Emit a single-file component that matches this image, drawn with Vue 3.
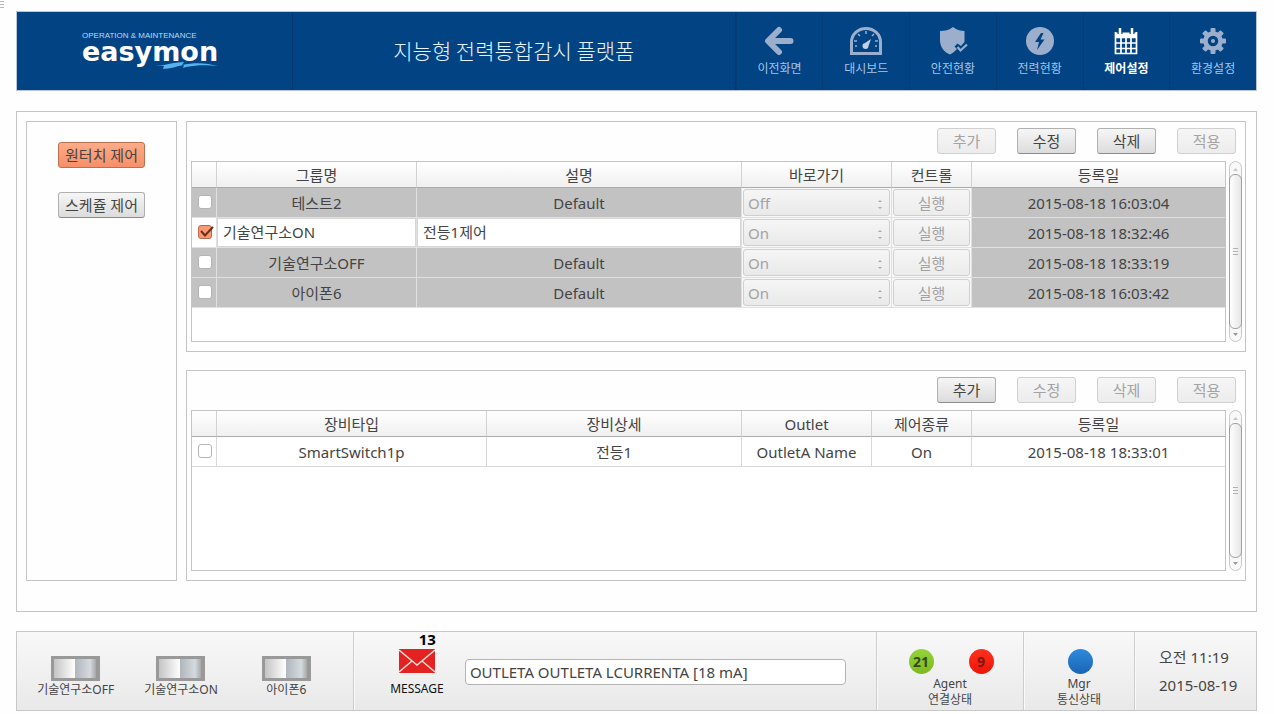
<script setup>
import { ref } from 'vue'

const nav = [
  { label: '이전화면', icon: 'back' },
  { label: '대시보드', icon: 'gauge' },
  { label: '안전현황', icon: 'shield' },
  { label: '전력현황', icon: 'power' },
  { label: '제어설정', icon: 'calendar', active: true },
  { label: '환경설정', icon: 'gear' },
]
const teeth = [0, 45, 90, 135, 180, 225, 270, 315]

const groupActions = [
  { label: '추가', disabled: true },
  { label: '수정' },
  { label: '삭제' },
  { label: '적용', disabled: true },
]
const deviceActions = [
  { label: '추가' },
  { label: '수정', disabled: true },
  { label: '삭제', disabled: true },
  { label: '적용', disabled: true },
]

const groups = ref([
  { name: '테스트2', desc: 'Default', shortcut: 'Off', date: '2015-08-18 16:03:04', checked: false },
  { name: '기술연구소ON', desc: '전등1제어', shortcut: 'On', date: '2015-08-18 18:32:46', checked: true },
  { name: '기술연구소OFF', desc: 'Default', shortcut: 'On', date: '2015-08-18 18:33:19', checked: false },
  { name: '아이폰6', desc: 'Default', shortcut: 'On', date: '2015-08-18 16:03:42', checked: false },
])
const devices = ref([
  { type: 'SmartSwitch1p', detail: '전등1', outlet: 'OutletA Name', control: 'On', date: '2015-08-18 18:33:01', checked: false },
])
const shortcuts = ['기술연구소OFF', '기술연구소ON', '아이폰6']
const message = ref('OUTLETA OUTLETA LCURRENTA [18 mA]')
</script>

<template>
  <div class="page">
    <svg class="handle" width="5" height="9" viewBox="0 0 5 9" aria-hidden="true">
      <path d="M0 1.5h4M0 4.5h4M0 7.5h4" stroke="#b5b5b5" />
    </svg>

    <header class="top">
      <div class="brand">
        <div class="logo">
          <span class="tagline">OPERATION &amp; MAINTENANCE</span>
          <span class="wordmark">easymon</span>
          <svg class="swoosh" width="64" height="8" viewBox="0 0 64 8" aria-hidden="true">
            <path d="M0 4C9 4 18 0 29 0L27 3C40 0 52 1 63 4C51 3 42 3 31 5L28 6L29 3C22 4 15 7 8 7L9 4Z" fill="#55b4ef" />
          </svg>
        </div>
      </div>
      <h1 class="title">지능형 전력통합감시 플랫폼</h1>
      <nav class="nav">
        <a v-for="n in nav" :key="n.label" href="#" :class="['nav-item', { active: n.active }]">
          <svg width="34" height="30" viewBox="0 0 34 30" aria-hidden="true">
            <g v-if="n.icon === 'back'" fill="none" stroke="#9bafcd" stroke-width="6" stroke-linecap="round" stroke-linejoin="round">
              <path d="M28.500 15H7M17 4L6 15L17 26" />
            </g>
            <g v-else-if="n.icon === 'gauge'">
              <path d="M2.500 27.500V16a14.500 13.500 0 0 1 29 0V27.500Z" fill="none" stroke="#9bafcd" stroke-width="3" />
              <path d="M17 5v3M9 8l2 2M25 8l-2 2M5 15h3M29 15h-3M6 20h2M28 20h-2" stroke="#9bafcd" stroke-width="1.500" />
              <path d="M22 13L19.500 20A3 3 0 1 1 16 17Z" fill="#c3d0e4" />
            </g>
            <g v-else-if="n.icon === 'shield'">
              <path d="M17 1C13 4 9 5 4 5V14C4 21 8 26 14 28.500C17 27 19 25 21 23L18.500 20.500L21.500 17.500L25 20L28.500 16V5C25 5 21 4 17 1Z" fill="#9bafcd" />
              <path d="M21.500 21L24.500 24.500L31 18.500" fill="none" stroke="#9bafcd" stroke-width="2.200" />
            </g>
            <g v-else-if="n.icon === 'power'">
              <circle cx="17" cy="15" r="14" fill="#9bafcd" />
              <path d="M18 7L12 16H16L14 24L21.500 13.500H17.500L20.500 7Z" fill="#014383" />
            </g>
            <g v-else-if="n.icon === 'calendar'" fill="none" stroke="#fff">
              <path d="M6.500 6V27.500H27.500V6M6 11.500H28M6 17H28M6 22.500H28M12 11V27M17 11V27M22 11V27" stroke-width="1.700" />
              <path d="M6 9H28" stroke-width="5" />
              <path d="M11 2V8M23 2V8" stroke="#014383" stroke-width="5" />
              <path d="M11 2V9M23 2V9" stroke-width="2.500" />
            </g>
            <g v-else>
              <rect v-for="t in teeth" :key="t" x="14.500" y="2" width="5" height="6" rx="1" :transform="`rotate(${t} 17 15)`" fill="#9bafcd" />
              <circle cx="17" cy="15" r="7.500" fill="none" stroke="#9bafcd" stroke-width="4.500" />
              <circle cx="17" cy="15" r="2" fill="#9bafcd" />
            </g>
          </svg>
          <span>{{ n.label }}</span>
        </a>
      </nav>
    </header>

    <main class="main">
      <aside class="side">
        <button type="button" class="btn selected">원터치 제어</button>
        <button type="button" class="btn">스케쥴 제어</button>
      </aside>

      <div class="content">
        <section class="panel groups">
          <div class="actions">
            <button v-for="a in groupActions" :key="a.label" type="button" class="btn" :disabled="a.disabled">{{ a.label }}</button>
          </div>
          <div class="grid">
            <div class="frame">
              <table>
                <colgroup>
                  <col class="c-check" /><col class="c-name" /><col class="c-desc" /><col class="c-short" /><col class="c-run" /><col class="c-date" />
                </colgroup>
                <thead>
                  <tr><th></th><th>그룹명</th><th>설명</th><th>바로가기</th><th>컨트롤</th><th>등록일</th></tr>
                </thead>
                <tbody>
                  <tr v-for="g in groups" :key="g.date" class="shaded">
                    <td :class="['check', { open: g.checked }]">
                      <label class="tick">
                        <input v-model="g.checked" type="checkbox" :aria-label="g.name" />
                        <svg v-if="g.checked" width="18" height="16" viewBox="0 0 18 16" aria-hidden="true">
                          <path d="M4 7L8 11.500L16 3" fill="none" stroke="#6b2d16" stroke-width="2" />
                        </svg>
                      </label>
                    </td>
                    <template v-if="g.checked">
                      <td class="open"><input v-model="g.name" class="cell-input" type="text" aria-label="그룹명" /></td>
                      <td class="open"><input v-model="g.desc" class="cell-input" type="text" aria-label="설명" /></td>
                    </template>
                    <template v-else>
                      <td>{{ g.name }}</td>
                      <td>{{ g.desc }}</td>
                    </template>
                    <td class="control">
                      <div class="picker">
                        <select v-model="g.shortcut" disabled aria-label="바로가기">
                          <option>On</option>
                          <option>Off</option>
                        </select>
                        <svg width="6" height="11" viewBox="0 0 6 11" aria-hidden="true">
                          <path d="M1 3L3 1L5 3ZM1 8L3 10L5 8Z" fill="#aaa" />
                        </svg>
                      </div>
                    </td>
                    <td class="control"><button type="button" class="btn run" disabled>실행</button></td>
                    <td>{{ g.date }}</td>
                  </tr>
                </tbody>
              </table>
            </div>
            <div class="scroll" aria-hidden="true"><i class="up"></i><b></b><i class="down"></i></div>
          </div>
        </section>

        <section class="panel devices">
          <div class="actions">
            <button v-for="a in deviceActions" :key="a.label" type="button" class="btn" :disabled="a.disabled">{{ a.label }}</button>
          </div>
          <div class="grid">
            <div class="frame">
              <table>
                <colgroup>
                  <col class="c-check" /><col class="c-type" /><col class="c-detail" /><col class="c-outlet" /><col class="c-kind" /><col class="c-date" />
                </colgroup>
                <thead>
                  <tr><th></th><th>장비타입</th><th>장비상세</th><th>Outlet</th><th>제어종류</th><th>등록일</th></tr>
                </thead>
                <tbody>
                  <tr v-for="d in devices" :key="d.type">
                    <td class="check">
                      <label class="tick"><input v-model="d.checked" type="checkbox" :aria-label="d.type" /></label>
                    </td>
                    <td>{{ d.type }}</td>
                    <td>{{ d.detail }}</td>
                    <td>{{ d.outlet }}</td>
                    <td>{{ d.control }}</td>
                    <td>{{ d.date }}</td>
                  </tr>
                </tbody>
              </table>
            </div>
            <div class="scroll" aria-hidden="true"><i class="up"></i><b></b><i class="down"></i></div>
          </div>
        </section>
      </div>
    </main>

    <footer class="bottom">
      <div class="toggles">
        <button v-for="s in shortcuts" :key="s" type="button" class="toggle">
          <span class="switch"></span>
          <span>{{ s }}</span>
        </button>
      </div>
      <div class="messages">
        <label class="mail" for="message">
          <span class="count">13</span>
          <svg width="36" height="24" viewBox="0 0 36 24" aria-hidden="true">
            <rect width="36" height="24" fill="#e32322" />
            <path d="M0 1L18 16L36 1M0 23L13 12M36 23L23 12" fill="none" stroke="#ffd9d2" stroke-width="1.500" />
          </svg>
          <span class="mail-label">MESSAGE</span>
        </label>
        <input id="message" v-model="message" class="message-input" type="text" />
      </div>
      <div class="status agent">
        <div class="lamps"><span class="lamp green">21</span><span class="lamp red">9</span></div>
        <span>Agent</span><span>연결상태</span>
      </div>
      <div class="status mgr">
        <div class="lamps"><span class="lamp blue"></span></div>
        <span>Mgr</span><span>통신상태</span>
      </div>
      <div class="clock"><span>오전 11:19</span><span>2015-08-19</span></div>
    </footer>
  </div>
</template>

<style>
body {
  background: #fefefe;
}
</style>

<style scoped>
.page,
.page * {
  box-sizing: border-box;
}
.page {
  position: relative;
  padding: 11px 17px 3px 16px;
  font-family: "Noto Sans", "Noto Sans CJK KR", sans-serif;
  font-size: 15px;
  line-height: 20px;
  color: #444;
}
button,
input,
select {
  font: inherit;
  color: inherit;
  margin: 0;
}
.handle {
  position: absolute;
  left: 0;
  top: 0;
}

.top {
  display: flex;
  height: 80px;
  border: 1px solid #b9c6de;
  background: #014383;
  color: #fff;
}
.brand {
  width: 276px;
  padding: 19px 0 0 65px;
  border-right: 1px solid #02376f;
}
.logo {
  position: relative;
  display: flex;
  flex-direction: column;
}
.tagline {
  font: 8px/10px "Liberation Sans", sans-serif;
  color: #b9dcf5;
}
.wordmark {
  font: bold 27px/22px "DejaVu Sans", sans-serif;
}
.swoosh {
  position: absolute;
  left: 73px;
  top: 31px;
}
.title {
  flex: 1;
  margin: 0;
  padding-top: 23px;
  text-align: center;
  font: 300 21px/30px "Noto Sans CJK KR", sans-serif;
  color: #e6f4ff;
  border-right: 1px solid #02376f;
}
.nav {
  display: grid;
  grid-template-columns: repeat(6, 1fr);
  width: 42%;
}
.nav-item {
  display: flex;
  flex-direction: column;
  align-items: center;
  padding-top: 14px;
  gap: 5px;
  border-left: 1px solid #053c76;
  font-size: 12px;
  line-height: 16px;
  color: #a5c4e8;
  text-decoration: none;
}
.nav-item.active {
  color: #fff;
  font-weight: 700;
}

.main {
  display: flex;
  gap: 9px;
  margin-top: 20px;
  padding: 9px 10px 30px 9px;
  border: 1px solid #c4c4c4;
}
.side {
  display: flex;
  flex-direction: column;
  align-items: center;
  gap: 24px;
  width: 151px;
  padding-top: 20px;
  border: 1px solid #c4c4c4;
}
.btn {
  height: 26px;
  padding: 0 6px;
  border: 1px solid #b0b0b0;
  border-bottom-color: #8c8c8c;
  border-radius: 3px;
  background: linear-gradient(#f6f6f6, #dcdcdc);
  line-height: 22px;
  white-space: nowrap;
}
.btn.selected {
  border-color: #b9714f;
  background: linear-gradient(#ffab88, #f68f69);
}
.btn:disabled {
  border-color: #cfcfcf;
  background: linear-gradient(#f6f6f6, #ececec);
  color: #a3a3a3;
}
.content {
  flex: 1;
  display: flex;
  flex-direction: column;
  gap: 18px;
  min-width: 0;
}
.panel {
  padding: 6px 4px 9px;
  border: 1px solid #c4c4c4;
}
.actions {
  display: flex;
  justify-content: flex-end;
  gap: 21px;
  padding-right: 5px;
  margin-bottom: 7px;
}
.actions .btn {
  width: 59px;
}
.grid {
  display: flex;
  gap: 3px;
}
.frame {
  flex: 1;
  border: 1px solid #c4c4c4;
  background: #fff;
}
.groups .frame {
  min-height: 181px;
}
.devices .frame {
  min-height: 161px;
}
table {
  width: 100%;
  table-layout: fixed;
  border-collapse: separate;
  border-spacing: 0;
}
.c-check { width: 25px; }
.c-name { width: 200px; }
.c-desc { width: 325px; }
.c-short { width: 150px; }
.c-run { width: 80px; }
.c-date { width: 253px; }
.c-type { width: 270px; }
.c-detail { width: 255px; }
.c-outlet { width: 130px; }
.c-kind { width: 100px; }
th {
  height: 26px;
  padding: 0;
  border-right: 1px solid #d2d2d2;
  border-bottom: 1px solid #ababab;
  background: linear-gradient(#fff, #f0f0f0);
  font-weight: 400;
  line-height: 20px;
}
td {
  height: 30px;
  padding: 0;
  border-right: 1px solid #d8d8d8;
  border-bottom: 1px solid #d8d8d8;
  text-align: center;
  line-height: 20px;
}
.shaded td {
  background: #c2c2c2;
  border-color: #e0e0e0;
}
.shaded td.open {
  background: #fff;
}
.shaded td.control {
  padding: 0 1px;
  background: #f8f8f8;
}
th:last-child,
td:last-child {
  border-right: 0;
}
td.check {
  padding: 0 0 1px 1px;
}
.tick {
  position: relative;
  display: block;
  width: 14px;
  height: 14px;
  margin: 0 auto;
}
.tick input {
  display: block;
  appearance: none;
  width: 14px;
  height: 14px;
  border: 1px solid #b4b4b4;
  border-radius: 3px;
  background: #fff;
}
.tick input:checked {
  border-color: #b5684a;
  background: #f79a73;
}
.tick svg {
  position: absolute;
  left: -1px;
  top: -1px;
}
.cell-input {
  display: block;
  width: 100%;
  height: 29px;
  padding: 0 5px 2px;
  border: 1px solid #d6d6d6;
  background: #fff;
}
.picker {
  position: relative;
}
.picker select {
  display: block;
  appearance: none;
  width: 100%;
  height: 27px;
  padding: 0 4px;
  border: 1px solid #cfcfcf;
  border-radius: 3px;
  background: linear-gradient(#f6f6f6, #e9e9e9);
  color: #a3a3a3;
  opacity: 1;
}
.picker svg {
  position: absolute;
  right: 7px;
  top: 10px;
}
.btn.run {
  display: block;
  width: 100%;
  height: 27px;
}
.scroll {
  display: flex;
  flex-direction: column;
  align-items: center;
  width: 13px;
  border: 1px solid #c8c8c8;
  border-radius: 7px;
  background: #f8f8f8;
}
.scroll i {
  width: 5px;
  height: 3px;
  background: #c8c8c8;
}
.scroll .up {
  margin: 6px 0 3px;
  clip-path: polygon(50% 0, 100% 100%, 0 100%);
}
.scroll .down {
  margin: 4px 0 5px;
  background: #999;
  clip-path: polygon(0 0, 100% 0, 50% 100%);
}
.scroll b {
  flex: 1;
  width: 13px;
  border: 1px solid #a0a0a0;
  border-radius: 6px;
  background:
    repeating-linear-gradient(#b0b0b0 0 1px, transparent 1px 3px) center / 5px 7px no-repeat,
    linear-gradient(90deg, #fff, #e6e6e6);
}

.bottom {
  display: flex;
  height: 80px;
  margin-top: 19px;
  border: 1px solid #c8c8c8;
  background: linear-gradient(#f8f8f8, #e9e9e9);
  font-size: 12px;
  line-height: 16px;
}
.bottom > div {
  border-right: 1px solid #cdcdcd;
  box-shadow: 1px 0 #fafafa;
}
.bottom > div:last-child {
  border-right: 0;
  box-shadow: none;
}
.toggles {
  display: grid;
  grid-template-columns: repeat(3, 1fr);
  width: 337px;
  padding: 24px 14px 0 6px;
}
.toggle {
  display: flex;
  flex-direction: column;
  align-items: center;
  gap: 1px;
  padding: 0;
  border: 0;
  background: none;
  white-space: nowrap;
}
.switch {
  width: 49px;
  height: 25px;
  border: 3px solid #999;
  border-right-width: 4px;
  background: linear-gradient(90deg, #c4c4c4, #fff 50%, #b0b6bc 50%, #d4dade 86%, #a8a8a8);
}
.messages {
  flex: 1;
  display: flex;
  align-items: flex-start;
}
.mail {
  position: relative;
  display: flex;
  flex-direction: column;
  align-items: center;
  gap: 8px;
  width: 54px;
  margin: 17px 21px 0 36px;
  color: #111;
}
.count {
  position: absolute;
  right: 8px;
  top: -18px;
  font-size: 15px;
  font-weight: 700;
  color: #000;
}
.message-input {
  flex: 0 1 382px;
  height: 26px;
  margin: 27px 30px 0 0;
  padding: 0 4px 1px;
  border: 1px solid #b4b4b4;
  border-radius: 4px;
  background: #fff;
  font-size: 15px;
}
.status {
  display: flex;
  flex-direction: column;
  align-items: center;
  padding-top: 17px;
}
.agent {
  width: 147px;
}
.mgr {
  width: 111px;
}
.lamps {
  display: flex;
  gap: 35px;
  padding-left: 2px;
  margin-bottom: 2px;
}
.lamp {
  width: 25px;
  height: 25px;
  border-radius: 50%;
  text-align: center;
  font-size: 14px;
  font-weight: 700;
  line-height: 25px;
}
.green {
  background: linear-gradient(#93d43a, #7cba1f);
  color: #35491c;
}
.red {
  background: linear-gradient(#ff3020, #ee1408);
  color: #7c1a12;
}
.blue {
  background: linear-gradient(#2f8add, #1a64b4);
}
.clock {
  display: flex;
  flex-direction: column;
  gap: 8px;
  width: 121px;
  padding: 15px 0 0 24px;
  font-size: 15px;
  line-height: 20px;
}
</style>
